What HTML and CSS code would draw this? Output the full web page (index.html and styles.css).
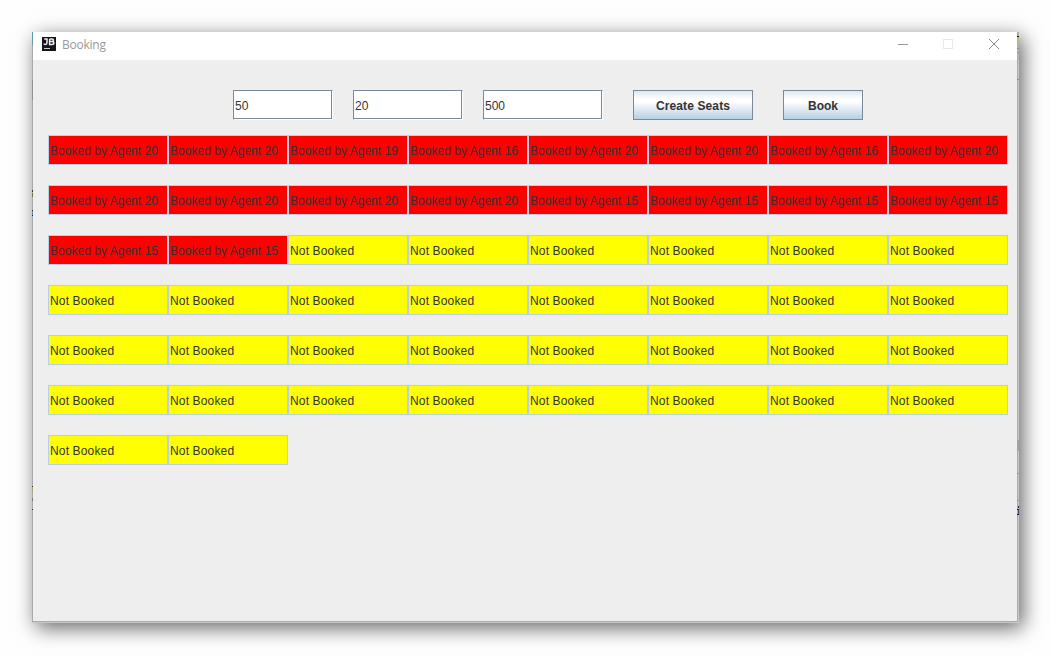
FILE: index.html
```html
<!DOCTYPE html>
<html lang="en">
<head>
<meta charset="utf-8">
<title>Booking</title>
<link rel="stylesheet" href="styles.css">
</head>
<body>
<div class="window">
  <header class="titlebar">
    <svg class="logo" width="14" height="14" viewBox="0 0 14 14">
      <rect width="14" height="14" fill="#15151a"/>
      <path d="M2.200 2H5V5.600Q5 7.400 3.400 7.400Q2.300 7.400 1.700 6.600M7.600 2V7.400H9.900Q11.900 7.400 11.900 5.900Q11.900 4.700 10.300 4.600H7.600M10.200 4.600Q11.500 4.400 11.500 3.300Q11.500 2 9.900 2H7.600" fill="none" stroke="#eee" stroke-width="1.500"/>
      <path d="M2 11.500H8" stroke="#ccc" stroke-width="1"/>
    </svg>
    <span class="title">Booking</span>
    <svg class="controls" width="102" height="12" viewBox="0 0 102 12">
      <path d="M0 6.500H10" stroke="#999"/>
      <rect x="45.500" y="1.500" width="9" height="9" fill="none" stroke="#e8e8e8"/>
      <path d="M91 1L101 11M101 1L91 11" stroke="#888" stroke-width="1"/>
    </svg>
  </header>
  <main class="content">
    <div class="toolbar">
      <div class="field field-rows">50</div>
      <div class="field field-agents">20</div>
      <div class="field field-delay">500</div>
      <button class="button create">Create Seats</button>
      <button class="button book">Book</button>
    </div>
    <div class="seats" id="seats"></div>
  </main>
  <i class="speck left" style="top:0;height:13px;background:#5f9cad"></i>
  <i class="speck left" style="top:48px;height:20px;background:#94928f"></i>
  <i class="speck left" style="top:158px;height:2px;background:#333"></i>
  <i class="speck left" style="top:161px;height:4px;background:#776f48"></i>
  <i class="speck left" style="top:178px;height:1px;background:#222"></i>
  <i class="speck left" style="top:179px;height:4px;background:#6587b4"></i>
  <i class="speck left" style="top:183px;height:1px;background:#222"></i>
  <i class="speck left" style="top:454px;height:1px;background:#333"></i>
  <i class="speck left" style="top:455px;height:4px;background:#b1a35c"></i>
  <i class="speck left" style="top:466px;height:3px;background:#77778e"></i>
  <i class="speck left" style="top:477px;height:1px;background:#22226c"></i>
  <i class="speck right" style="top:0;height:28px;background:#b0b0b0"></i>
  <i class="speck right" style="top:4px;height:1px;background:#111"></i>
  <i class="speck edge" style="top:5px;height:5px;background:#c9b66d"></i>
  <i class="speck right" style="top:16px;height:1px;background:#888"></i>
  <i class="speck right" style="top:20px;height:1px;background:#999"></i>
  <i class="speck right" style="top:47px;height:1px;background:#888"></i>
  <i class="speck right" style="top:408px;height:11px;background:#a3a3a3"></i>
  <i class="speck right" style="top:441px;height:1px;background:#999"></i>
  <i class="speck right" style="top:468px;height:1px;background:#999"></i>
  <i class="speck edge" style="top:474px;height:2px;background:#202060"></i>
  <i class="speck right" style="top:477px;height:1px;background:#151575"></i>
  <i class="speck edge" style="top:478px;height:4px;background:#6b365f"></i>
  <i class="speck right" style="top:482px;height:1px;background:#151575"></i>
</div>
<script src="seats.js"></script>
</body>
</html>
```
FILE: styles.css
```css
* {
  box-sizing: border-box;
}

body {
  margin: 0;
  padding: 32px;
  background: #fefefe;
  font-family: "Liberation Sans", Arial, sans-serif;
  font-size: 12px;
  color: #333;
}

.window {
  position: relative;
  width: 987px;
  height: 591px;
  border: solid;
  border-width: 0 1px 1px 0;
  border-color: #c8c8c8;
  box-shadow: 4px 5px 19px rgba(0, 0, 0, 0.6);
}

.titlebar {
  display: flex;
  align-items: center;
  width: 985px;
  height: 28px;
  padding: 0 17px 4px 9px;
  border-left: 1px solid #aaa;
  background: #fff;
}

.title {
  margin-left: 6px;
  padding-top: 2px;
  font-family: "Open Sans", "Noto Sans", sans-serif;
  font-size: 12px;
  letter-spacing: -0.25px;
  line-height: 16px;
  color: #999;
}

.controls {
  margin-left: auto;
}

.content {
  width: 986px;
  height: 562px;
  padding: 30px 0 0 15px;
  border: solid #aaa;
  border-width: 0 1px 1px;
  background: #eee;
}

.toolbar {
  display: flex;
  margin-left: 185px;
}

.field {
  height: 30px;
  margin-right: 20px;
  padding-left: 1px;
  border: 1px solid #7a8a99;
  background: #fff;
  box-shadow: inset -1px -1px #7a8a99;
  border-right-color: #fff;
  border-bottom-color: #fff;
  line-height: 30px;
}

.field-rows {
  width: 100px;
}

.field-agents {
  width: 110px;
}

.field-delay {
  width: 120px;
  margin-right: 30px;
}

.button {
  height: 30px;
  padding: 2px 0 0;
  border: 1px solid #7a8a99;
  border-radius: 0;
  background: linear-gradient(#dde8f3 0%, #fff 30%, #fff 38%, #b8cfe5 100%);
  font: bold 12px "Liberation Sans", Arial, sans-serif;
  color: #333;
}

.create {
  width: 120px;
  margin-right: 30px;
  letter-spacing: 0.12px;
}

.book {
  width: 80px;
}

.seats {
  display: grid;
  grid-template-columns: repeat(8, 120px);
  row-gap: 20px;
  margin-top: 15px;
}

.seat {
  height: 30px;
  padding-left: 1px;
  border: 1px solid #b8cfe5;
  background: #ff0;
  line-height: 30px;
  letter-spacing: 0.15px;
  white-space: nowrap;
}

.seat.booked {
  background: #f00;
  letter-spacing: 0.03px;
}

.speck {
  position: absolute;
  width: 1px;
}

.speck.left {
  left: 0;
}

.speck.right {
  left: 985px;
  width: 2px;
}

.speck.edge {
  left: 986px;
}
```
FILE: seats.js
```js
const agents = [20, 20, 19, 16, 20, 20, 16, 20, 20, 20, 20, 20, 15, 15, 15, 15, 15, 15];
const seats = document.getElementById("seats");
for (let i = 0; i < 50; i++) {
  const seat = document.createElement("div");
  seat.className = i < agents.length ? "seat booked" : "seat";
  seat.textContent = i < agents.length ? "Booked by Agent " + agents[i] : "Not Booked";
  seats.appendChild(seat);
}
```
